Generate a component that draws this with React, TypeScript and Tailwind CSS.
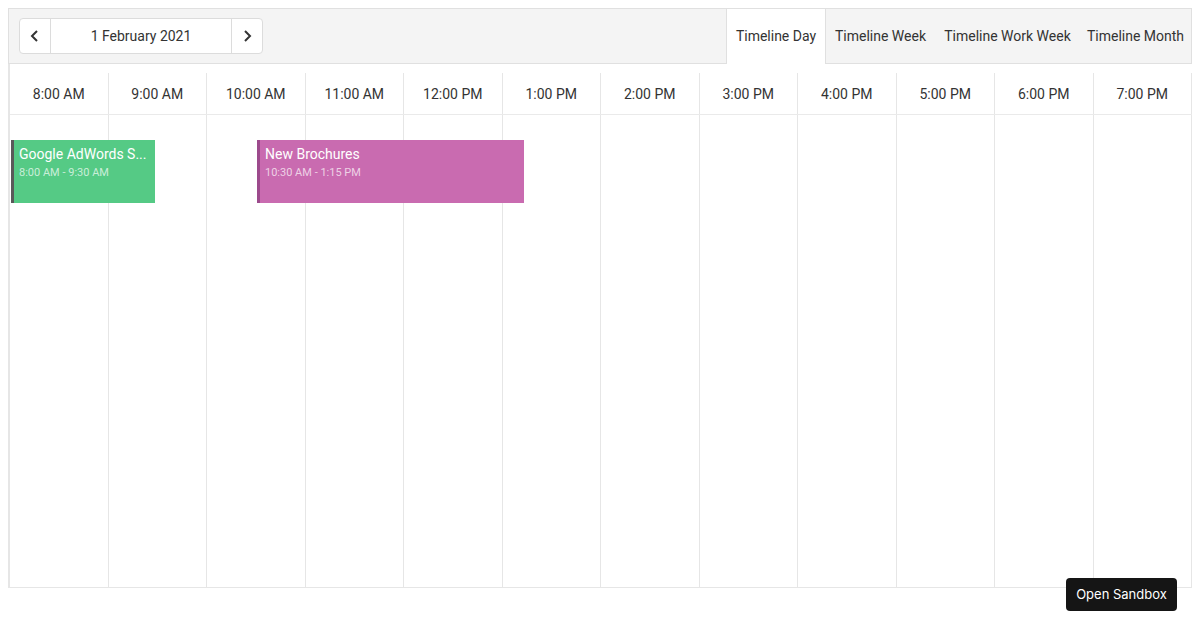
import React from "react";

const hours = [
  "8:00 AM",
  "9:00 AM",
  "10:00 AM",
  "11:00 AM",
  "12:00 PM",
  "1:00 PM",
  "2:00 PM",
  "3:00 PM",
  "4:00 PM",
  "5:00 PM",
  "6:00 PM",
  "7:00 PM",
];

const tabs = [
  { label: "Timeline Day", w: "w-[100px]" },
  { label: "Timeline Week", w: "w-[109px]" },
  { label: "Timeline Work Week", w: "w-[145px]" },
  { label: "Timeline Month", w: "w-[111px]" },
];

export default function App() {
  return (
    <div className="relative h-[630px] w-[1200px] bg-white" style={{ fontFamily: 'Roboto, "Liberation Sans", Arial, sans-serif' }}>
      <div className="absolute left-[8px] top-[8px] w-[1184px]">
        {/* Toolbar */}
        <div className="flex h-[56px] items-stretch justify-between border border-[#e0e0e0] bg-[#f4f4f4]">
          <div className="flex items-center pl-[10px]">
            <div className="flex h-[36px] overflow-hidden rounded-[4px] border border-[#dcdcdc] bg-white text-[#333]">
              <button className="flex w-[31px] items-center justify-center border-r border-[#dcdcdc]">
                <svg width="12" height="14" viewBox="0 0 12 14" fill="none">
                  <path d="M8 2 L3 7 L8 12" stroke="#333" strokeWidth="2" />
                </svg>
              </button>
              <div className="flex w-[180px] items-center justify-center text-[14px]">1 February 2021</div>
              <button className="flex w-[31px] items-center justify-center border-l border-[#dcdcdc]">
                <svg width="12" height="14" viewBox="0 0 12 14" fill="none">
                  <path d="M4 2 L9 7 L4 12" stroke="#333" strokeWidth="2" />
                </svg>
              </button>
            </div>
          </div>
          <div className="flex items-stretch">
            {tabs.map((t, i) => (
              <div
                key={t.label}
                className={
                  i === 0
                    ? `${t.w} -mb-px flex items-center justify-center border-x border-[#e0e0e0] bg-white text-[14px] text-[#333]`
                    : `${t.w} flex items-center justify-center pt-[1px] text-[14px] text-[#333]`
                }
              >
                {t.label}
              </div>
            ))}
          </div>
        </div>

        {/* Timeline */}
        <div className="border-b border-l-2 border-[#e6e6e6]">
          <div className="grid grid-cols-12 border-b border-[#eaeaea] pt-[9px]">
            {hours.map((h) => (
              <div key={h} className="flex h-[41px] items-center justify-center border-r border-[#e6e6e6] pt-[2px] text-[14px] text-[#333]">
                {h}
              </div>
            ))}
          </div>
          <div className="relative">
            <div className="grid h-[472px] grid-cols-12">
              {hours.map((h) => (
                <div key={h} className="border-r border-[#e6e6e6]" />
              ))}
            </div>
            <div className="absolute left-[1px] top-[25px] flex h-[63px] w-[144px] flex-col overflow-hidden border-l-[3px] border-[#595959] bg-[#55ca85] pl-[5px] pt-[5px] text-white">
              <div className="truncate text-[14px] leading-[18px]">Google AdWords S...</div>
              <div className="mt-[3px] text-[11px] leading-[14px] text-white/70">8:00 AM - 9:30 AM</div>
            </div>
            <div className="absolute left-[247px] top-[25px] flex h-[63px] w-[267px] flex-col overflow-hidden border-l-[3px] border-[#9c4a8c] bg-[#c96bb0] pl-[5px] pt-[5px] text-white">
              <div className="truncate text-[14px] leading-[18px]">New Brochures</div>
              <div className="mt-[3px] text-[11px] leading-[14px] text-white/70">10:30 AM - 1:15 PM</div>
            </div>
          </div>
        </div>
      </div>

      <button
        className="absolute left-[1066px] top-[578px] flex h-[33px] w-[111px] items-center justify-center rounded-[4px] bg-[#151515] text-[13px] text-white"
        style={{ fontFamily: 'Inter, "Liberation Sans", sans-serif' }}
      >
        Open Sandbox
      </button>
    </div>
  );
}
